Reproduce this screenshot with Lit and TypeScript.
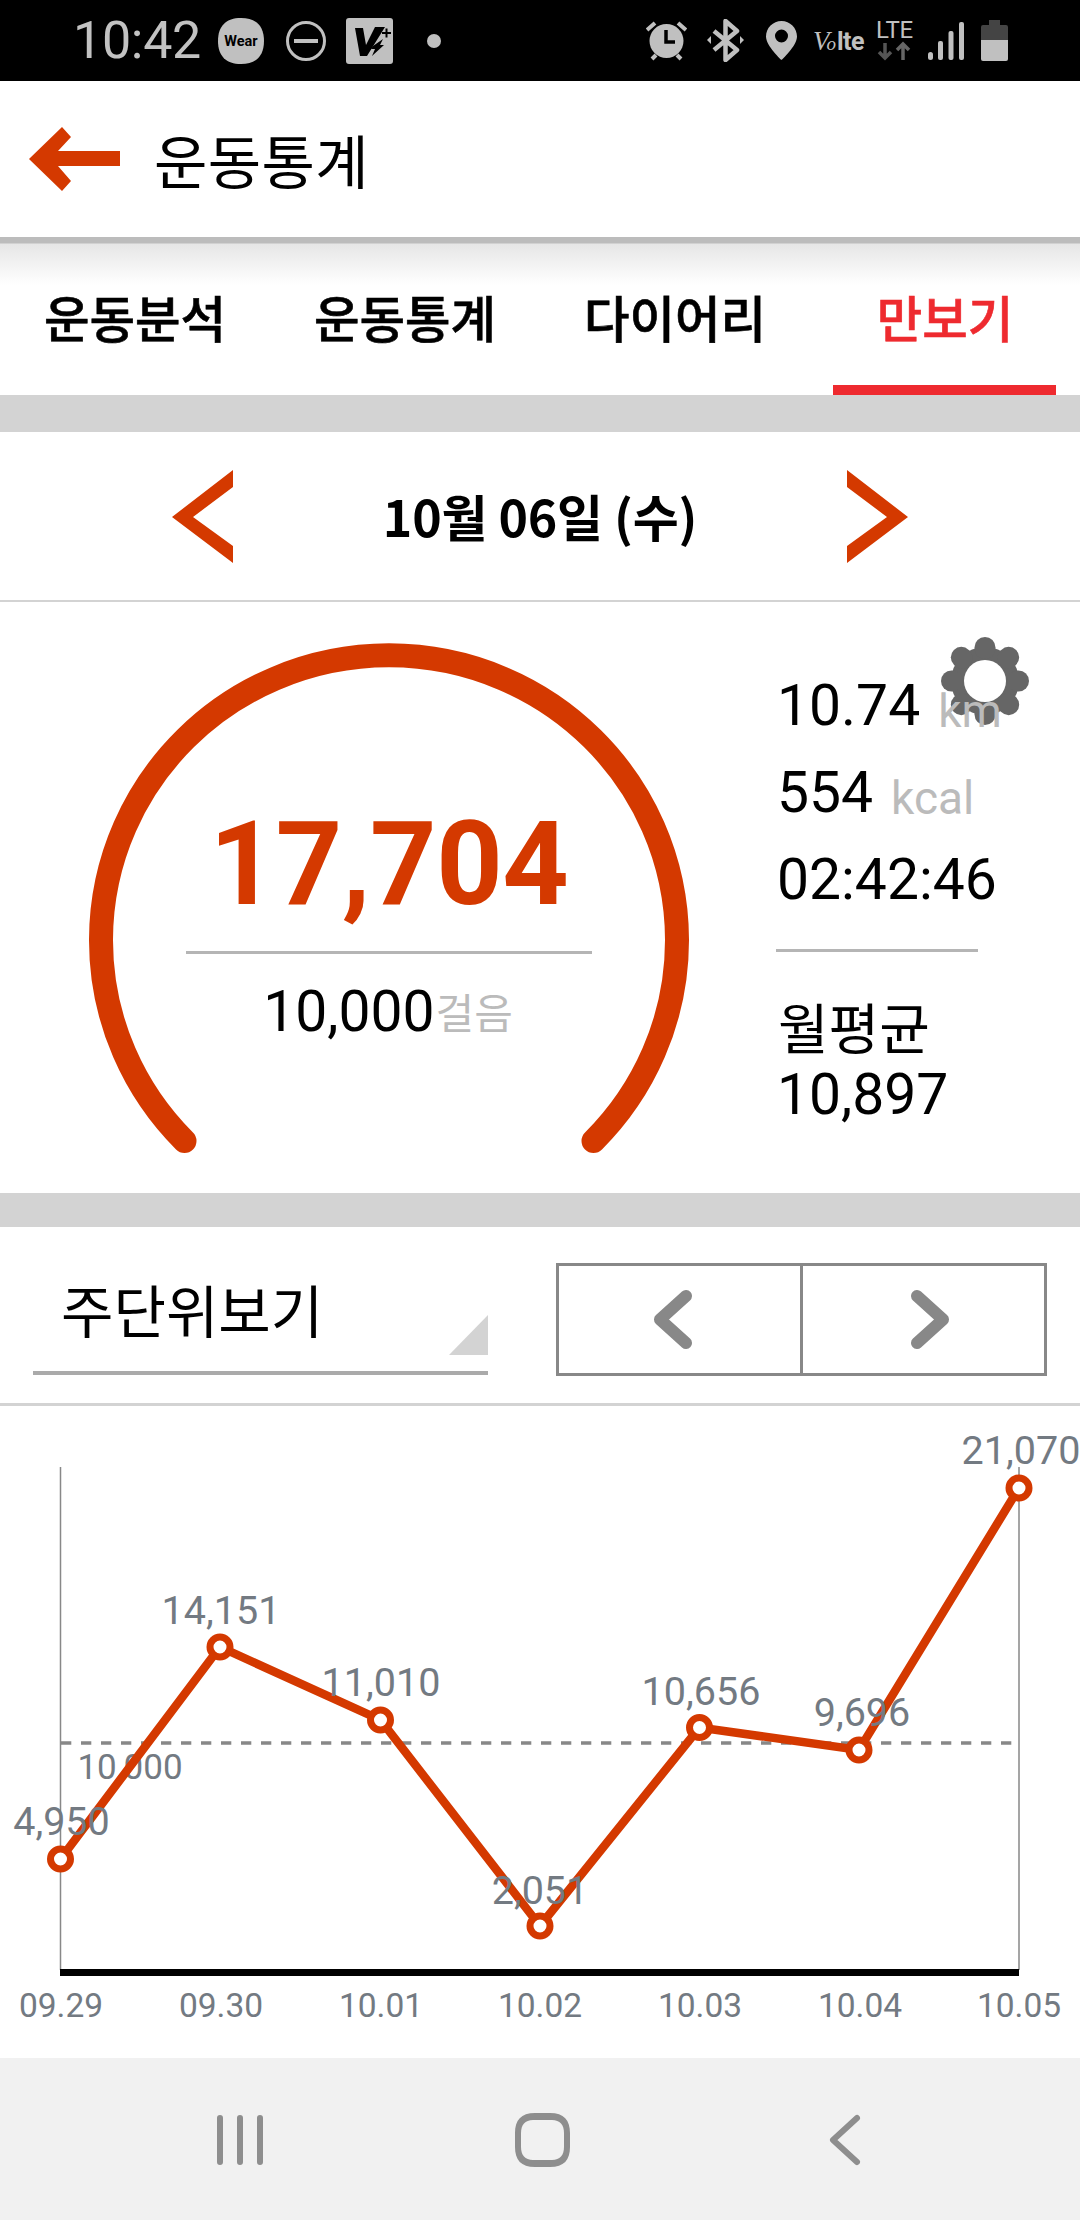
import { LitElement, html, css, svg } from "lit";
import { customElement } from "lit/decorators.js";

const KR = `"Noto Sans CJK KR", "Noto Sans", sans-serif`;
const pts: [number, number, string, number, number][] = [
  [60.5, 1859, "4,950", 61.5, 1835],
  [220, 1647, "14,151", 221, 1624],
  [380.5, 1720, "11,010", 381, 1696],
  [540, 1926, "2,051", 540, 1904],
  [699.5, 1727.5, "10,656", 701, 1705],
  [859, 1750, "9,696", 862, 1726],
  [1019, 1488, "21,070", 1021, 1464],
];
const days = ["09.29", "09.30", "10.01", "10.02", "10.03", "10.04", "10.05"];
const dayX = [61, 221, 381, 540, 700, 860, 1019];
const Y0 = 1406;

@customElement("app-root")
export class AppRoot extends LitElement {
  static styles = css`
    :host { display: block; width: 1080px; height: 2220px; background: #fff; font-family: Roboto, ${css([KR] as any)}; overflow: hidden; }
    svg { display: block; flex: none; }
    .status { height: 81px; background: #000; display: flex; align-items: center; justify-content: space-between; padding: 0 72px 0 73px; box-sizing: border-box; }
    .st-group { display: flex; align-items: center; }
    .time { font-size: 52px; line-height: 81px; color: #c2c2c2; width: 125px; letter-spacing: -0.3px; white-space: nowrap; }
    .ml20 { margin-left: 20px; } .ml22 { margin-left: 22px; } .ml16 { margin-left: 16px; } .ml9 { margin-left: 9px; } .ml14 { margin-left: 14px; } .ml17 { margin-left: 17px; } .ml34 { margin-left: 34px; }
    .volte { width: 53px; height: 32px; display: flex; align-items: baseline; line-height: 32px; color: #c0c0c0; white-space: nowrap; }
    .vo { font-family: "Liberation Serif", serif; font-style: italic; font-size: 27px; width: 24px; letter-spacing: -3px; }
    .vo small { font-size: 19px; }
    .lt { font-family: Roboto, sans-serif; font-weight: 700; font-size: 25px; letter-spacing: -0.5px; }
    .lte { width: 39px; display: flex; flex-direction: column; align-items: center; }
    .lte div { font-size: 24px; line-height: 20px; height: 20px; color: #c0c0c0; letter-spacing: -0.3px; white-space: nowrap; }
    .appbar { height: 156px; display: flex; align-items: center; padding-left: 29px; box-sizing: border-box; }
    .title { font-family: ${css([KR] as any)}; font-size: 58px; line-height: 60px; color: #000; margin-left: 34px; letter-spacing: 0.4px; }
    .tabs { height: 158px; display: grid; grid-template-columns: repeat(4, 270px); background: linear-gradient(#bcbcbc 0, #bcbcbc 6px, #e6e6e6 7px, #fff 48px); }
    .tab { display: flex; flex-direction: column; align-items: center; font-family: ${css([KR] as any)}; font-size: 49.5px; font-weight: 500; -webkit-text-stroke: 0.6px currentColor; line-height: 60px; color: #000; padding-top: 50px; box-sizing: border-box; position: relative; }
    .tab.on { color: #ee2a2f; }
    .tab.on::after { content: ""; position: absolute; left: 23px; width: 223px; bottom: 0; height: 10px; background: #ee2a2f; }
    .band { background: #d3d3d3; }
    .b37 { height: 37px; } .b34 { height: 34px; }
    .date { height: 170px; box-sizing: border-box; border-bottom: 2px solid #d3d3d3; display: flex; align-items: center; justify-content: space-between; padding: 0 172px 0 172px; }
    .date-t { font-family: ${css([KR] as any)}; font-size: 50px; font-weight: 700; line-height: 60px; color: #000; margin-top: -2px; letter-spacing: -0.2px; }
    .gauge-sec { height: 591px; display: flex; position: relative; }
    .gauge { width: 778px; position: relative; display: flex; flex-direction: column; align-items: center; padding-top: 206px; box-sizing: border-box; }
    .arc { position: absolute; left: 0; top: 0; }
    .big { position: relative; font-size: 116px; line-height: 112px; font-weight: 700; color: #d43900; letter-spacing: -0.4px; }
    .div1 { position: relative; width: 406px; height: 3px; background: #b5b5b5; margin-top: 31px; }
    .goal { position: relative; display: flex; align-items: baseline; margin-top: 30px; font-size: 57px; line-height: 56px; color: #000; transform: translateX(-1px); }
    .goal span { font-family: ${css([KR] as any)}; font-size: 42px; line-height: 54px; color: #bbb; margin-left: 1px; transform: translateY(-2px); }
    .stats { padding-top: 60px; position: relative; }
    .sr { font-size: 57px; height: 87px; line-height: 87px; color: #000; white-space: nowrap; position: relative; z-index: 1; display: flex; align-items: baseline; margin-left: -1px; }
    .sr span { font-size: 46px; line-height: 87px; color: #bbb; margin-left: 18px; transform: translateY(2px); }
    .div2 { width: 202px; height: 3px; background: #b5b5b5; margin: 26px 0 0 -2px; }
    .avg { font-family: ${css([KR] as any)}; font-size: 55px; line-height: 60px; color: #000; margin-top: 43px; }
    .avgv { font-size: 57px; line-height: 56px; color: #000; margin: 12px 0 0 -1px; }
    .gear { position: absolute; left: 941px; top: 34px; }
    .sel { height: 179px; box-sizing: border-box; border-bottom: 3px solid #d3d3d3; display: flex; padding: 36px 33px 0 33px; }
    .dd { width: 455px; height: 112px; box-sizing: border-box; border-bottom: 4px solid #aaa; position: relative; font-family: ${css([KR] as any)}; font-size: 57px; line-height: 60px; color: #000; padding: 15px 0 0 28px; }
    .tri { position: absolute; right: 0; bottom: 16px; }
    .btns { margin-left: 68px; width: 491px; height: 113px; box-sizing: border-box; border: 3px solid #888; display: flex; }
    .btn { flex: 1; display: flex; align-items: center; justify-content: center; padding-right: 14px; box-sizing: border-box; }
    .btn + .btn { border-left: 3px solid #888; padding: 0 0 0 14px; }
    .chart { height: 652px; }
    .chart text { font-family: Roboto, sans-serif; fill: #737a82; text-anchor: middle; }
    .nav { height: 162px; background: #f1f1f1; display: flex; }
  `;

  render() {
    return html`
      <div class="status">
        <div class="st-group">
          <div class="time">10:42</div>
          <svg class="ml20" width="46" height="46" viewBox="0 0 46 46"><path d="M23 0C38 0 46 8 46 23S38 46 23 46 0 38 0 23 8 0 23 0Z" fill="#c0c0c0"/><text x="23" y="28" text-anchor="middle" font-family="Roboto" font-weight="700" font-size="14.5" fill="#000">Wear</text></svg>
          <svg class="ml22" width="40" height="40" viewBox="0 0 40 40"><circle cx="20" cy="20" r="18.5" fill="none" stroke="#c0c0c0" stroke-width="3"/><rect x="8" y="18" width="24" height="4" fill="#c0c0c0"/></svg>
          <svg class="ml20" width="47" height="46" viewBox="0 0 47 46"><rect width="47" height="46" rx="3" fill="#c0c0c0"/><path d="M9 10h8l3 17L29 9h10L21 38h-7Z" fill="#000"/><path d="M27 28l10-7-3 6h4L26 38l3-7h-4Z" fill="#000"/><path d="M36 15h9M40.500 10.500v9" stroke="#000" stroke-width="2" fill="none"/></svg>
          <svg class="ml34" width="14" height="14" viewBox="0 0 14 14"><circle cx="7" cy="7" r="7" fill="#c0c0c0"/></svg>
        </div>
        <div class="st-group">
          <svg width="41" height="41" viewBox="0 0 41 41"><circle cx="20.500" cy="21" r="17" fill="#c0c0c0"/><path d="M20 10v12h9" fill="none" stroke="#000" stroke-width="3.500"/><path d="M1 10L9 3M40 10L32 3M6 39l4-4M35 39l-4-4" stroke="#c0c0c0" stroke-width="4" fill="none"/></svg>
          <svg class="ml20" width="37" height="43" viewBox="0 0 37 43"><path d="M7 12L30 31 18.500 41V2L30 12 7 31" fill="none" stroke="#c0c0c0" stroke-width="4.500" stroke-linejoin="round"/><path d="M0 21l4-4v8ZM37 21l-4-4v8Z" fill="#c0c0c0"/></svg>
          <svg class="ml22" width="31" height="39" viewBox="0 0 31 39"><path fill-rule="evenodd" d="M15.500 0C7 0 0 7 0 15.500 0 25 15.500 39 15.500 39S31 25 31 15.500C31 7 24 0 15.500 0ZM15.500 8.500a6.500 6.500 0 1 1 0 13 6.500 6.500 0 0 1 0-13Z" fill="#c0c0c0"/></svg>
          <div class="volte ml16"><span class="vo">V<small>o</small></span><span class="lt">lte</span></div>
          <div class="lte ml9">
            <div>LTE</div>
            <svg width="39" height="21" viewBox="0 0 39 21"><path d="M10 3v15M4 12l6 6 6-6" stroke="#555" stroke-width="3.500" fill="none"/><path d="M28 20V4M22 10l6-6 6 6" stroke="#666" stroke-width="3.500" fill="none"/></svg>
          </div>
          <svg class="ml14" width="36" height="38" viewBox="0 0 36 38"><rect x="0" y="30" width="5" height="8" rx="2.500" fill="#c0c0c0"/><rect x="10" y="19" width="5" height="19" rx="2" fill="#c0c0c0"/><rect x="20.500" y="9" width="5" height="29" rx="2" fill="#c0c0c0"/><rect x="31" y="0" width="5" height="38" rx="2" fill="#c0c0c0"/></svg>
          <svg class="ml17" width="27" height="41" viewBox="0 0 27 41"><path d="M8 0h11v5h6a2 2 0 0 1 2 2v13H0V7a2 2 0 0 1 2-2h6Z" fill="#444"/><path d="M0 20h27v19a2 2 0 0 1-2 2H2a2 2 0 0 1-2-2Z" fill="#c0c0c0"/></svg>
        </div>
      </div>

      <div class="appbar">
        <svg width="91" height="64" viewBox="0 0 91 64"><path d="M0 32L33 0l9 10L29 24h62v15H29l13 15-9 10Z" fill="#d43900"/></svg>
        <div class="title">운동통계</div>
      </div>

      <div class="tabs">
        <div class="tab">운동분석</div>
        <div class="tab">운동통계</div>
        <div class="tab">다이어리</div>
        <div class="tab on">만보기</div>
      </div>
      <div class="band b37"></div>

      <div class="date">
        <svg width="61" height="93" viewBox="0 0 61 93"><path d="M61 0L0 47l61 46V76L21 47 61 17Z" fill="#d43900"/></svg>
        <div class="date-t">10월 06일 (수)</div>
        <svg width="61" height="93" viewBox="0 0 61 93"><path d="M0 0l61 47L0 93V76L40 47 0 17Z" fill="#d43900"/></svg>
      </div>

      <div class="gauge-sec">
        <div class="gauge">
          <svg class="arc" width="778" height="591" viewBox="0 0 778 591"><path d="M184.500 539A288 285 0 1 1 593.500 539" fill="none" stroke="#d43900" stroke-width="24" stroke-linecap="round"/></svg>
          <div class="big">17,704</div>
          <div class="div1"></div>
          <div class="goal">10,000<span>걸음</span></div>
        </div>
        <div class="stats">
          <div class="sr">10.74<span>km</span></div>
          <div class="sr">554<span>kcal</span></div>
          <div class="sr">02:42:46</div>
          <div class="div2"></div>
          <div class="avg">월평균</div>
          <div class="avgv">10,897</div>
        </div>
        <svg class="gear" width="88" height="90" viewBox="-44 -45 88 90">
          <circle r="34" fill="#666"/>
          ${[0, 45, 90, 135, 180, 225, 270, 315].map(
            (a) => svg`<g transform="rotate(${a})"><rect x="-10.500" y="-44" width="21" height="22" rx="10.500" fill="#666"/></g>`
          )}
          <circle r="21" fill="#fff"/>
        </svg>
      </div>
      <div class="band b34"></div>

      <div class="sel">
        <div class="dd">주단위보기
          <svg class="tri" width="39" height="40" viewBox="0 0 39 40"><path d="M39 0V40H0Z" fill="#d3d3d3"/></svg>
        </div>
        <div class="btns">
          <div class="btn"><svg width="39" height="59" viewBox="0 0 39 59"><path d="M33 6L7 29.500 33 53" fill="none" stroke="#888" stroke-width="12" stroke-linecap="round" stroke-linejoin="round"/></svg></div>
          <div class="btn"><svg width="39" height="59" viewBox="0 0 39 59"><path d="M6 6L32 29.500 6 53" fill="none" stroke="#888" stroke-width="12" stroke-linecap="round" stroke-linejoin="round"/></svg></div>
        </div>
      </div>

      <svg class="chart" width="1080" height="652" viewBox="0 ${Y0} 1080 652">
        <path d="M60.500 1467V1970M1019 1467V1970" stroke="#888" stroke-width="1.500" fill="none"/>
        <path d="M61 1743H1012" stroke="#888" stroke-width="3.500" stroke-dasharray="10.300 9.700" fill="none"/>
        <text x="130" y="1779" font-size="35">10,000</text>
        <path d="M${pts.map((p) => `${p[0]} ${p[1]}`).join("L")}" fill="none" stroke="#d43900" stroke-width="8.500"/>
        ${pts.map((p) => svg`<circle cx=${p[0]} cy=${p[1]} r="10" fill="#fff" stroke="#d43900" stroke-width="7"/>`)}
        ${pts.map((p) => svg`<text x=${p[3]} y=${p[4]} font-size="39.500">${p[2]}</text>`)}
        <rect x="60" y="1969" width="959" height="7" fill="#000"/>
        ${days.map((d, i) => svg`<text x=${dayX[i]} y="2017" font-size="33.500">${d}</text>`)}
      </svg>

      <div class="nav">
        <svg width="1080" height="162" viewBox="0 2058 1080 162">
          <path d="M220 2118V2162M240 2118V2162M260 2118V2162" stroke="#8e8e8e" stroke-width="6" stroke-linecap="round"/>
          <path fill-rule="evenodd" d="M535 2113h15c14 0 20 7 20 20v14c0 13-6 20-20 20h-15c-14 0-20-7-20-20v-14c0-13 6-20 20-20ZM533 2120c-8 0-12 5-12 13v14c0 8 4 13 12 13h19c8 0 12-5 12-13v-14c0-8-4-13-12-13Z" fill="#8e8e8e"/>
          <path d="M857 2118L833 2140 857 2162" fill="none" stroke="#8e8e8e" stroke-width="6" stroke-linecap="round" stroke-linejoin="round"/>
        </svg>
      </div>
    `;
  }
}
